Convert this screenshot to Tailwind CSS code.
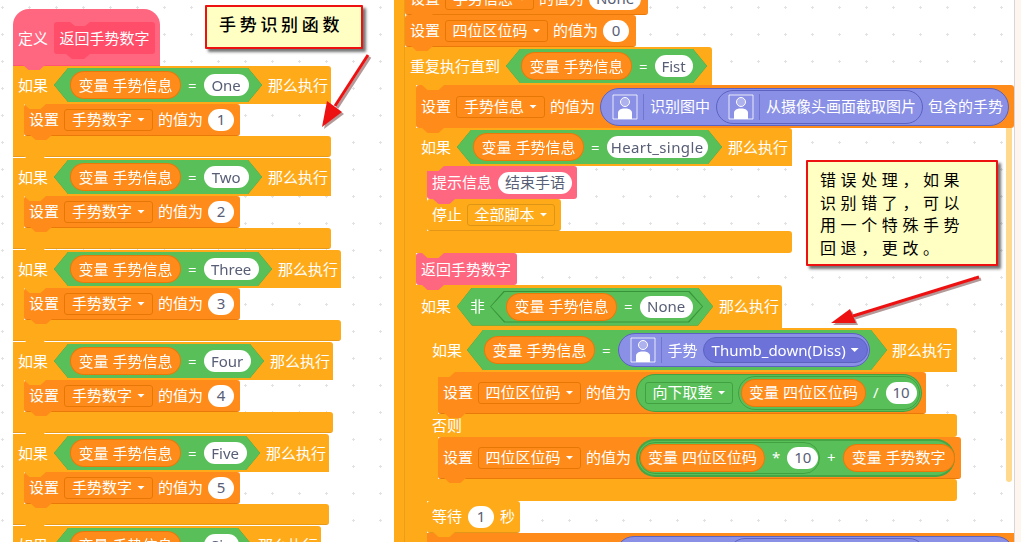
<!DOCTYPE html>
<html lang="zh">
  <head>
    <meta charset="UTF-8" />
    <title>手势识别函数</title>
    <script src="https://cdn.jsdelivr.net/npm/@tailwindcss/browser@4"></script>
  </head>
  <body class="overflow-hidden">
    <div class="flex h-[542px] w-[1021px] overflow-hidden">
    <main class="relative h-[542px] w-[1014px] shrink-0 overflow-hidden whitespace-nowrap bg-white bg-[radial-gradient(#e2e2e2_1px,transparent_1.3px)] bg-[size:27px_27px] bg-[position:-11px_-6px] text-[15px] leading-none text-white [font-family:'Noto_Sans','Noto_Sans_CJK_SC',sans-serif]">

      <!-- Left stack -->
      <section class="absolute left-[13px] top-[9px] w-fit">
        <div class="relative flex h-[57px] w-[147px] items-end gap-[6px] rounded-t-[16px] border-b border-[#FF3355]/30 bg-[#FF6680] pb-[11px] pl-[5px]">
          <span class="mb-[8px]">定义</span>
          <span class="relative flex h-[32px] w-[101px] items-center justify-center rounded-[3px] bg-[#FF4D6A]">返回手势数字
            <i class="absolute left-[16px] top-0 h-[4px] w-[20px] bg-[#FF6680] [clip-path:polygon(0_0,100%_0,75%_100%,25%_100%)]"></i>
            <i class="absolute left-[12px] top-full h-[5px] w-[24px] bg-[#FF4D6A] [clip-path:polygon(0_0,100%_0,75%_100%,25%_100%)]"></i>
          </span>
          <i class="absolute left-[10px] top-full z-10 h-[5px] w-[22px] bg-[#FF6680] [clip-path:polygon(0_0,100%_0,75%_100%,25%_100%)]"></i>
        </div>
        <div id="left-stack"></div>
      </section>

      <!-- Right stack -->
      <section class="absolute left-[394px] top-[-17px] flex w-[640px]">
        <div class="w-[11px] shrink-0 border-r border-[#CF8B17]/40 bg-[#FFAB19]"></div>
        <div class="min-w-0 flex-1">
          <div class="relative flex h-[32px] w-[243px] items-center gap-[5px] rounded-[3px] border-b border-[#DB6E00]/60 bg-[#FF8C1A] pl-[5px]">
            <span>设置</span>
            <span class="flex h-[22px] w-[89px] items-center justify-center gap-[5px] rounded-[3px] border border-[#DB6E00]/70">手势信息<i class="h-[4px] w-[8px] bg-white [clip-path:polygon(0_0,100%_0,50%_100%)]"></i></span>
            <span>的值为</span>
            <span class="flex h-[22px] w-[52px] items-center justify-center rounded-full bg-white text-[#575E75]">None</span>
            <i class="absolute left-[6px] top-full z-10 h-[5px] w-[22px] bg-[#FF8C1A] [clip-path:polygon(0_0,100%_0,75%_100%,25%_100%)]"></i>
          </div>
          <div class="relative flex h-[32px] w-[231px] items-center gap-[5px] rounded-[3px] border-b border-[#DB6E00]/60 bg-[#FF8C1A] pl-[5px]">
            <span>设置</span>
            <span class="flex h-[22px] w-[103px] items-center justify-center gap-[5px] rounded-[3px] border border-[#DB6E00]/70">四位区位码<i class="h-[4px] w-[8px] bg-white [clip-path:polygon(0_0,100%_0,50%_100%)]"></i></span>
            <span>的值为</span>
            <span class="flex h-[22px] w-[26px] items-center justify-center rounded-full bg-white text-[#575E75]">0</span>
            <i class="absolute left-[6px] top-full z-10 h-[5px] w-[22px] bg-[#FF8C1A] [clip-path:polygon(0_0,100%_0,75%_100%,25%_100%)]"></i>
          </div>

          <!-- repeat until -->
          <div class="relative flex h-[38px] w-[307px] items-center gap-[6px] rounded-tr-[3px] bg-[#FFAB19] pl-[5px]">
            <span>重复执行直到</span>
            <span class="shrink-0 drop-shadow-[0_0_0.6px_#2f8a2f]">
              <span class="flex h-[34px] w-[201px] items-center gap-[7px] bg-[#59C059] pl-[15px] [clip-path:polygon(14px_0,calc(100%-14px)_0,100%_50%,calc(100%-14px)_100%,14px_100%,0_50%)]">
                <span class="flex h-[28px] w-[111px] shrink-0 items-center justify-center rounded-full border border-[#DB6E00]/60 bg-[#FF8C1A]">变量 手势信息</span>
                <span>=</span>
                <span class="flex h-[22px] w-[38px] shrink-0 items-center justify-center rounded-full bg-white text-[#575E75]">Fist</span>
              </span>
            </span>
            <i class="absolute left-[17px] top-full z-10 h-[5px] w-[22px] bg-[#FFAB19] [clip-path:polygon(0_0,100%_0,75%_100%,25%_100%)]"></i>
          </div>
          <div class="flex">
            <div class="w-[11px] shrink-0 bg-[#FFAB19]"></div>
            <div class="min-w-0 flex-1">
              <div class="relative flex h-[43px] w-[598px] items-center gap-[5px] rounded-[3px] bg-[#FF8C1A] pl-[5px]">
                <span>设置</span>
                <span class="flex h-[22px] w-[89px] items-center justify-center gap-[5px] rounded-[3px] border border-[#DB6E00]/70">手势信息<i class="h-[4px] w-[8px] bg-white [clip-path:polygon(0_0,100%_0,50%_100%)]"></i></span>
                <span>的值为</span>
                <span class="flex h-[38px] w-[409px] shrink-0 items-center rounded-full border border-[#5C62C0] bg-[#8A90E5] pl-[11px]">
                  <svg class="h-[26px] w-[26px] shrink-0" viewBox="0 0 26 26" fill="none"><path d="M1 1h24v24H1z" stroke="#fff" stroke-opacity=".8"/><circle cx="13" cy="8" r="4.5" fill="#fff" fill-opacity=".3" stroke="#fff"/><path d="M6 25v-6c0-3 3-4 5-4.5h4c2 .5 5 1.500 5 4.500v6z" fill="#fff"/></svg>
                  <i class="ml-[5px] h-[26px] w-px bg-[#7076D0]"></i>
                  <span class="ml-[6px]">识别图中</span>
                  <span class="ml-[6px] flex h-[34px] w-[207px] shrink-0 items-center rounded-full border border-[#5C62C0] bg-[#8A90E5] pl-[11px]">
                    <svg class="h-[26px] w-[26px] shrink-0" viewBox="0 0 26 26" fill="none"><path d="M1 1h24v24H1z" stroke="#fff" stroke-opacity=".8"/><circle cx="13" cy="8" r="4.5" fill="#fff" fill-opacity=".3" stroke="#fff"/><path d="M6 25v-6c0-3 3-4 5-4.5h4c2 .5 5 1.500 5 4.500v6z" fill="#fff"/></svg>
                    <i class="ml-[5px] h-[26px] w-px bg-[#7076D0]"></i>
                    <span class="ml-[6px]">从摄像头画面截取图片</span>
                  </span>
                  <span class="ml-[5px]">包含的手势</span>
                </span>
                <i class="absolute left-[6px] top-full z-10 h-[5px] w-[22px] bg-[#FF8C1A] [clip-path:polygon(0_0,100%_0,75%_100%,25%_100%)]"></i>
              </div>

              <!-- if Heart_single -->
              <div class="relative flex h-[38px] w-[376px] items-center gap-[6px] rounded-tr-[3px] bg-[#FFAB19] pl-[5px]">
                <span>如果</span>
                <span class="shrink-0 drop-shadow-[0_0_0.6px_#2f8a2f]">
                  <span class="flex h-[34px] w-[265px] items-center gap-[7px] bg-[#59C059] pl-[16px] [clip-path:polygon(14px_0,calc(100%-14px)_0,100%_50%,calc(100%-14px)_100%,14px_100%,0_50%)]">
                    <span class="flex h-[28px] w-[111px] shrink-0 items-center justify-center rounded-full border border-[#DB6E00]/60 bg-[#FF8C1A]">变量 手势信息</span>
                    <span>=</span>
                    <span class="flex h-[22px] w-[101px] shrink-0 items-center justify-center rounded-full bg-white tracking-[0.4px] text-[#575E75]">Heart_single</span>
                  </span>
                </span>
                <span>那么执行</span>
                <i class="absolute left-[6px] top-full z-10 h-[5px] w-[22px] bg-[#FFAB19] [clip-path:polygon(0_0,100%_0,75%_100%,25%_100%)]"></i>
              </div>
              <div class="flex">
                <div class="w-[11px] shrink-0 bg-[#FFAB19]"></div>
                <div>
                  <div class="relative flex h-[33px] w-[150px] items-center gap-[6px] rounded-[3px] bg-[#FF6680] pl-[5px]">
                    <span>提示信息</span>
                    <span class="flex h-[22px] w-[74px] items-center justify-center rounded-full bg-white text-[#575E75]">结束手语</span>
                    <i class="absolute left-[6px] top-full z-10 h-[5px] w-[22px] bg-[#FF6680] [clip-path:polygon(0_0,100%_0,75%_100%,25%_100%)]"></i>
                  </div>
                  <div class="flex h-[32px] w-[134px] items-center gap-[5px] rounded-[3px] border-b border-[#CF8B17]/60 bg-[#FFAB19] pl-[5px]">
                    <span>停止</span>
                    <span class="flex h-[22px] w-[88px] items-center justify-center gap-[5px] rounded-[3px] border border-[#CF8B17]/70">全部脚本<i class="h-[4px] w-[8px] bg-white [clip-path:polygon(0_0,100%_0,50%_100%)]"></i></span>
                  </div>
                </div>
              </div>
              <div class="relative h-[22px] w-[376px] rounded-r-[3px] bg-[#FFAB19]">
                <i class="absolute left-[6px] top-full z-10 h-[5px] w-[22px] bg-[#FFAB19] [clip-path:polygon(0_0,100%_0,75%_100%,25%_100%)]"></i>
              </div>

              <div class="relative flex h-[32px] w-[101px] items-center rounded-[3px] bg-[#FF6680] pl-[5px]">
                <span>返回手势数字</span>
                <i class="absolute left-[6px] top-full z-10 h-[5px] w-[22px] bg-[#FF6680] [clip-path:polygon(0_0,100%_0,75%_100%,25%_100%)]"></i>
              </div>

              <!-- if not None -->
              <div class="relative flex h-[43px] w-[366px] items-center gap-[6px] rounded-tr-[3px] bg-[#FFAB19] pl-[5px]">
                <span>如果</span>
                <span class="shrink-0 drop-shadow-[0_0_0.6px_#2f8a2f]">
                  <span class="flex h-[38px] w-[256px] items-center gap-[5px] bg-[#59C059] pl-[13px] [clip-path:polygon(15px_0,calc(100%-15px)_0,100%_50%,calc(100%-15px)_100%,15px_100%,0_50%)]">
                    <span>非</span>
                    <span class="h-[32px] w-[213px] shrink-0 bg-[#389438] p-px [clip-path:polygon(14px_0,calc(100%-14px)_0,100%_50%,calc(100%-14px)_100%,14px_100%,0_50%)]">
                      <span class="flex h-[30px] w-full items-center gap-[7px] bg-[#59C059] pl-[15px] [clip-path:polygon(14px_0,calc(100%-14px)_0,100%_50%,calc(100%-14px)_100%,14px_100%,0_50%)]">
                        <span class="flex h-[28px] w-[111px] shrink-0 items-center justify-center rounded-full border border-[#DB6E00]/60 bg-[#FF8C1A]">变量 手势信息</span>
                        <span>=</span>
                        <span class="flex h-[22px] w-[53px] shrink-0 items-center justify-center rounded-full bg-white text-[#575E75]">None</span>
                      </span>
                    </span>
                  </span>
                </span>
                <span>那么执行</span>
                <i class="absolute left-[6px] top-full z-10 h-[5px] w-[22px] bg-[#FFAB19] [clip-path:polygon(0_0,100%_0,75%_100%,25%_100%)]"></i>
              </div>
              <div class="flex">
                <div class="w-[11px] shrink-0 bg-[#FFAB19]"></div>
                <div>
                  <!-- if Thumb_down -->
                  <div class="relative flex h-[44px] w-[530px] items-center gap-[5px] rounded-tr-[3px] bg-[#FFAB19] pl-[5px]">
                    <span>如果</span>
                    <span class="shrink-0 drop-shadow-[0_0_0.6px_#2f8a2f]">
                      <span class="flex h-[40px] w-[420px] items-center gap-[7px] bg-[#59C059] pl-[17px] [clip-path:polygon(16px_0,calc(100%-16px)_0,100%_50%,calc(100%-16px)_100%,16px_100%,0_50%)]">
                        <span class="flex h-[28px] w-[111px] shrink-0 items-center justify-center rounded-full border border-[#DB6E00]/60 bg-[#FF8C1A]">变量 手势信息</span>
                        <span>=</span>
                        <span class="flex h-[34px] w-[252px] shrink-0 items-center rounded-full border border-[#5C62C0] bg-[#8A90E5] pl-[11px]">
                          <svg class="h-[26px] w-[26px] shrink-0" viewBox="0 0 26 26" fill="none"><path d="M1 1h24v24H1z" stroke="#fff" stroke-opacity=".8"/><circle cx="13" cy="8" r="4.5" fill="#fff" fill-opacity=".3" stroke="#fff"/><path d="M6 25v-6c0-3 3-4 5-4.5h4c2 .5 5 1.500 5 4.500v6z" fill="#fff"/></svg>
                          <i class="ml-[5px] h-[26px] w-px bg-[#7076D0]"></i>
                          <span class="ml-[6px]">手势</span>
                          <span class="ml-[5px] flex h-[26px] w-[165px] shrink-0 items-center justify-center gap-[5px] rounded-full border border-[#5C62C0] bg-[#6C72D8]">Thumb_down(Diss)<i class="h-[4px] w-[8px] bg-white [clip-path:polygon(0_0,100%_0,50%_100%)]"></i></span>
                        </span>
                      </span>
                    </span>
                    <span>那么执行</span>
                    <i class="absolute left-[6px] top-full z-10 h-[5px] w-[22px] bg-[#FFAB19] [clip-path:polygon(0_0,100%_0,75%_100%,25%_100%)]"></i>
                  </div>
                  <div class="flex">
                    <div class="w-[11px] shrink-0 bg-[#FFAB19]"></div>
                    <div class="relative flex h-[42px] w-[488px] items-center gap-[5px] rounded-[3px] border-b border-[#DB6E00]/60 bg-[#FF8C1A] pl-[5px]">
                      <span>设置</span>
                      <span class="flex h-[22px] w-[103px] items-center justify-center gap-[5px] rounded-[3px] border border-[#DB6E00]/70">四位区位码<i class="h-[4px] w-[8px] bg-white [clip-path:polygon(0_0,100%_0,50%_100%)]"></i></span>
                      <span>的值为</span>
                      <span class="flex h-[38px] w-[286px] shrink-0 items-center gap-[5px] rounded-full border border-[#389438]/70 bg-[#59C059] pl-[8px]">
                        <span class="flex h-[22px] w-[88px] shrink-0 items-center justify-center gap-[5px] rounded-[3px] border border-[#389438]/70">向下取整<i class="h-[4px] w-[8px] bg-white [clip-path:polygon(0_0,100%_0,50%_100%)]"></i></span>
                        <span class="flex h-[34px] w-[182px] shrink-0 items-center gap-[7px] rounded-full border border-[#389438]/70 pl-[2px]">
                          <span class="flex h-[28px] w-[125px] shrink-0 items-center justify-center rounded-full border border-[#DB6E00]/60 bg-[#FF8C1A]">变量 四位区位码</span>
                          <span>/</span>
                          <span class="flex h-[22px] w-[31px] shrink-0 items-center justify-center rounded-full bg-white text-[#575E75]">10</span>
                        </span>
                      </span>
                      <i class="absolute left-[6px] top-full z-10 h-[5px] w-[22px] bg-[#FF8C1A] [clip-path:polygon(0_0,100%_0,75%_100%,25%_100%)]"></i>
                    </div>
                  </div>
                  <div class="flex h-[23px] w-[530px] items-center rounded-r-[3px] bg-[#FFAB19] pl-[5px]"><span>否则</span></div>
                  <div class="flex">
                    <div class="w-[11px] shrink-0 bg-[#FFAB19]"></div>
                    <div class="relative flex h-[42px] w-[523px] items-center gap-[5px] rounded-[3px] border-b border-[#DB6E00]/60 bg-[#FF8C1A] pl-[5px]">
                      <span>设置</span>
                      <span class="flex h-[22px] w-[103px] items-center justify-center gap-[5px] rounded-[3px] border border-[#DB6E00]/70">四位区位码<i class="h-[4px] w-[8px] bg-white [clip-path:polygon(0_0,100%_0,50%_100%)]"></i></span>
                      <span>的值为</span>
                      <span class="flex h-[38px] w-[319px] shrink-0 items-center gap-[7px] rounded-full border-2 border-[#389438]/60 bg-[#59C059] pl-px">
                        <span class="flex h-[32px] w-[181px] shrink-0 items-center gap-[7px] rounded-full border border-[#389438]/70">
                          <span class="flex h-[28px] w-[125px] shrink-0 items-center justify-center rounded-full border border-[#DB6E00]/60 bg-[#FF8C1A]">变量 四位区位码</span>
                          <span>*</span>
                          <span class="flex h-[22px] w-[31px] shrink-0 items-center justify-center rounded-full bg-white text-[#575E75]">10</span>
                        </span>
                        <span>+</span>
                        <span class="flex h-[28px] w-[112px] shrink-0 items-center justify-center rounded-full border border-[#DB6E00]/60 bg-[#FF8C1A]">变量 手势数字</span>
                      </span>
                      <i class="absolute left-[6px] top-full z-10 h-[5px] w-[22px] bg-[#FF8C1A] [clip-path:polygon(0_0,100%_0,75%_100%,25%_100%)]"></i>
                    </div>
                  </div>
                  <div class="relative h-[22px] w-[530px] rounded-r-[3px] bg-[#FFAB19]">
                    <i class="absolute left-[6px] top-full z-10 h-[5px] w-[22px] bg-[#FFAB19] [clip-path:polygon(0_0,100%_0,75%_100%,25%_100%)]"></i>
                  </div>
                  <div class="relative flex h-[32px] w-[93px] items-center gap-[6px] rounded-[3px] border-b border-[#CF8B17]/60 bg-[#FFAB19] pl-[5px]">
                    <span>等待</span>
                    <span class="flex h-[22px] w-[26px] items-center justify-center rounded-full bg-white text-[#575E75]">1</span>
                    <span>秒</span>
                    <i class="absolute left-[6px] top-full z-10 h-[5px] w-[22px] bg-[#FFAB19] [clip-path:polygon(0_0,100%_0,75%_100%,25%_100%)]"></i>
                  </div>
                  <div class="flex h-[40px] w-[590px] items-start bg-[#FF8C1A] pl-[188px] pt-[3px]">
                    <span class="flex h-[38px] w-[400px] shrink-0 items-start rounded-[19px] border border-[#5C62C0] bg-[#8A90E5] pl-[112px] pt-px">
                      <span class="h-[34px] w-[198px] rounded-full border border-[#5C62C0]"></span>
                    </span>
                  </div>
                </div>
              </div>
            </div>
          </div>
        </div>
      </section>

      <!-- Scrollbar of the script area -->
      <div class="absolute left-[1006px] top-[128px] h-[354px] w-[6px] rounded-b-full bg-[#FFD98E]"></div>

      <!-- Callouts -->
      <div class="absolute left-[205px] top-[5px] flex h-[44px] w-[158px] items-center rounded-[1px] border-2 border-[#EE1111] bg-[#FFFFC4] pb-[5px] pl-[12px] text-[17px] font-medium tracking-[3.7px] text-black shadow-[3px_3px_3px_rgba(0,0,0,0.55)]">手势识别函数</div>
      <div class="absolute left-[806px] top-[160px] h-[106px] w-[192px] rounded-[1px] border-2 border-[#EE1111] bg-[#FFFFC4] pl-[12px] pt-[7px] text-[16px] leading-[22.5px] tracking-[4.6px] text-black shadow-[3px_3px_3px_rgba(0,0,0,0.55)]">错误处理，如果<br />识别错了，可以<br />用一个特殊手势<br />回退，更改。</div>

      <!-- Arrows -->
      <svg class="pointer-events-none absolute left-0 top-0 h-[542px] w-[1014px]" viewBox="0 0 1014 542" fill="none">
        <g transform="translate(2 2)" opacity=".4">
          <path d="M368 55 335 106" stroke="#400" stroke-width="3" />
          <path d="M322 127 327 101 342 112z" fill="#400" />
          <path d="M979 277 853 316" stroke="#400" stroke-width="3" />
          <path d="M831 323 850 309 856 323z" fill="#400" />
        </g>
        <path d="M368 55 335 106" stroke="#EE1111" stroke-width="3" />
        <path d="M322 127 327 101 342 112z" fill="#EE1111" />
        <path d="M979 277 853 316" stroke="#EE1111" stroke-width="3" />
        <path d="M831 323 850 309 856 323z" fill="#EE1111" />
      </svg>
    </main>
    <aside class="flex-1 border-l border-[#D6D6D6] bg-[#FDF5EE]"></aside>
    </div>

    <script>
      // 如果 blocks of the left stack: answer label, block width, input width, number
      const rows = [
        { name: "One", width: 318, input: 45, value: 1 },
        { name: "Two", width: 318, input: 45, value: 2 },
        { name: "Three", width: 328, input: 55, value: 3 },
        { name: "Four", width: 320, input: 47, value: 4 },
        { name: "Five", width: 316, input: 43, value: 5 },
        { name: "Six", width: 308, input: 35, value: 6 },
      ];
      document.getElementById("left-stack").innerHTML = rows
        .map(
          (row) => `
          <div class="relative mb-px">
            <div class="relative flex h-[38px] items-center gap-[6px] rounded-tr-[3px] bg-[#FFAB19] pl-[5px]" style="width:${row.width}px">
              <span>如果</span>
              <span class="shrink-0 drop-shadow-[0_0_0.6px_#2f8a2f]">
                <span class="flex h-[34px] items-center gap-[7px] bg-[#59C059] pl-[16px] [clip-path:polygon(14px_0,calc(100%-14px)_0,100%_50%,calc(100%-14px)_100%,14px_100%,0_50%)]" style="width:${row.input + 163}px">
                  <span class="flex h-[28px] w-[111px] shrink-0 items-center justify-center rounded-full border border-[#DB6E00]/60 bg-[#FF8C1A]">变量 手势信息</span>
                  <span>=</span>
                  <span class="flex h-[22px] shrink-0 items-center justify-center rounded-full bg-white text-[#575E75]" style="width:${row.input}px">${row.name}</span>
                </span>
              </span>
              <span>那么执行</span>
              <i class="absolute left-[11px] top-full z-10 h-[5px] w-[22px] bg-[#FFAB19] [clip-path:polygon(0_0,100%_0,75%_100%,25%_100%)]"></i>
            </div>
            <div class="flex">
              <div class="w-[11px] shrink-0 bg-[#FFAB19]"></div>
              <div class="relative flex h-[32px] w-[216px] items-center gap-[5px] rounded-[3px] border-b border-[#DB6E00]/60 bg-[#FF8C1A] pl-[5px]">
                <span>设置</span>
                <span class="flex h-[22px] w-[89px] items-center justify-center gap-[5px] rounded-[3px] border border-[#DB6E00]/70">手势数字<i class="h-[4px] w-[8px] bg-white [clip-path:polygon(0_0,100%_0,50%_100%)]"></i></span>
                <span>的值为</span>
                <span class="flex h-[22px] w-[26px] items-center justify-center rounded-full bg-white text-[#575E75]">${row.value}</span>
                <i class="absolute left-[6px] top-full z-10 h-[5px] w-[22px] bg-[#FF8C1A] [clip-path:polygon(0_0,100%_0,75%_100%,25%_100%)]"></i>
              </div>
            </div>
            <div class="relative h-[21px] rounded-r-[3px] border-b border-[#CF8B17]/50 bg-[#FFAB19]" style="width:${row.width}px">
              <i class="absolute left-[11px] top-full z-10 h-[5px] w-[22px] bg-[#FFAB19] [clip-path:polygon(0_0,100%_0,75%_100%,25%_100%)]"></i>
            </div>
          </div>`
        )
        .join("");
    </script>
  </body>
</html>
